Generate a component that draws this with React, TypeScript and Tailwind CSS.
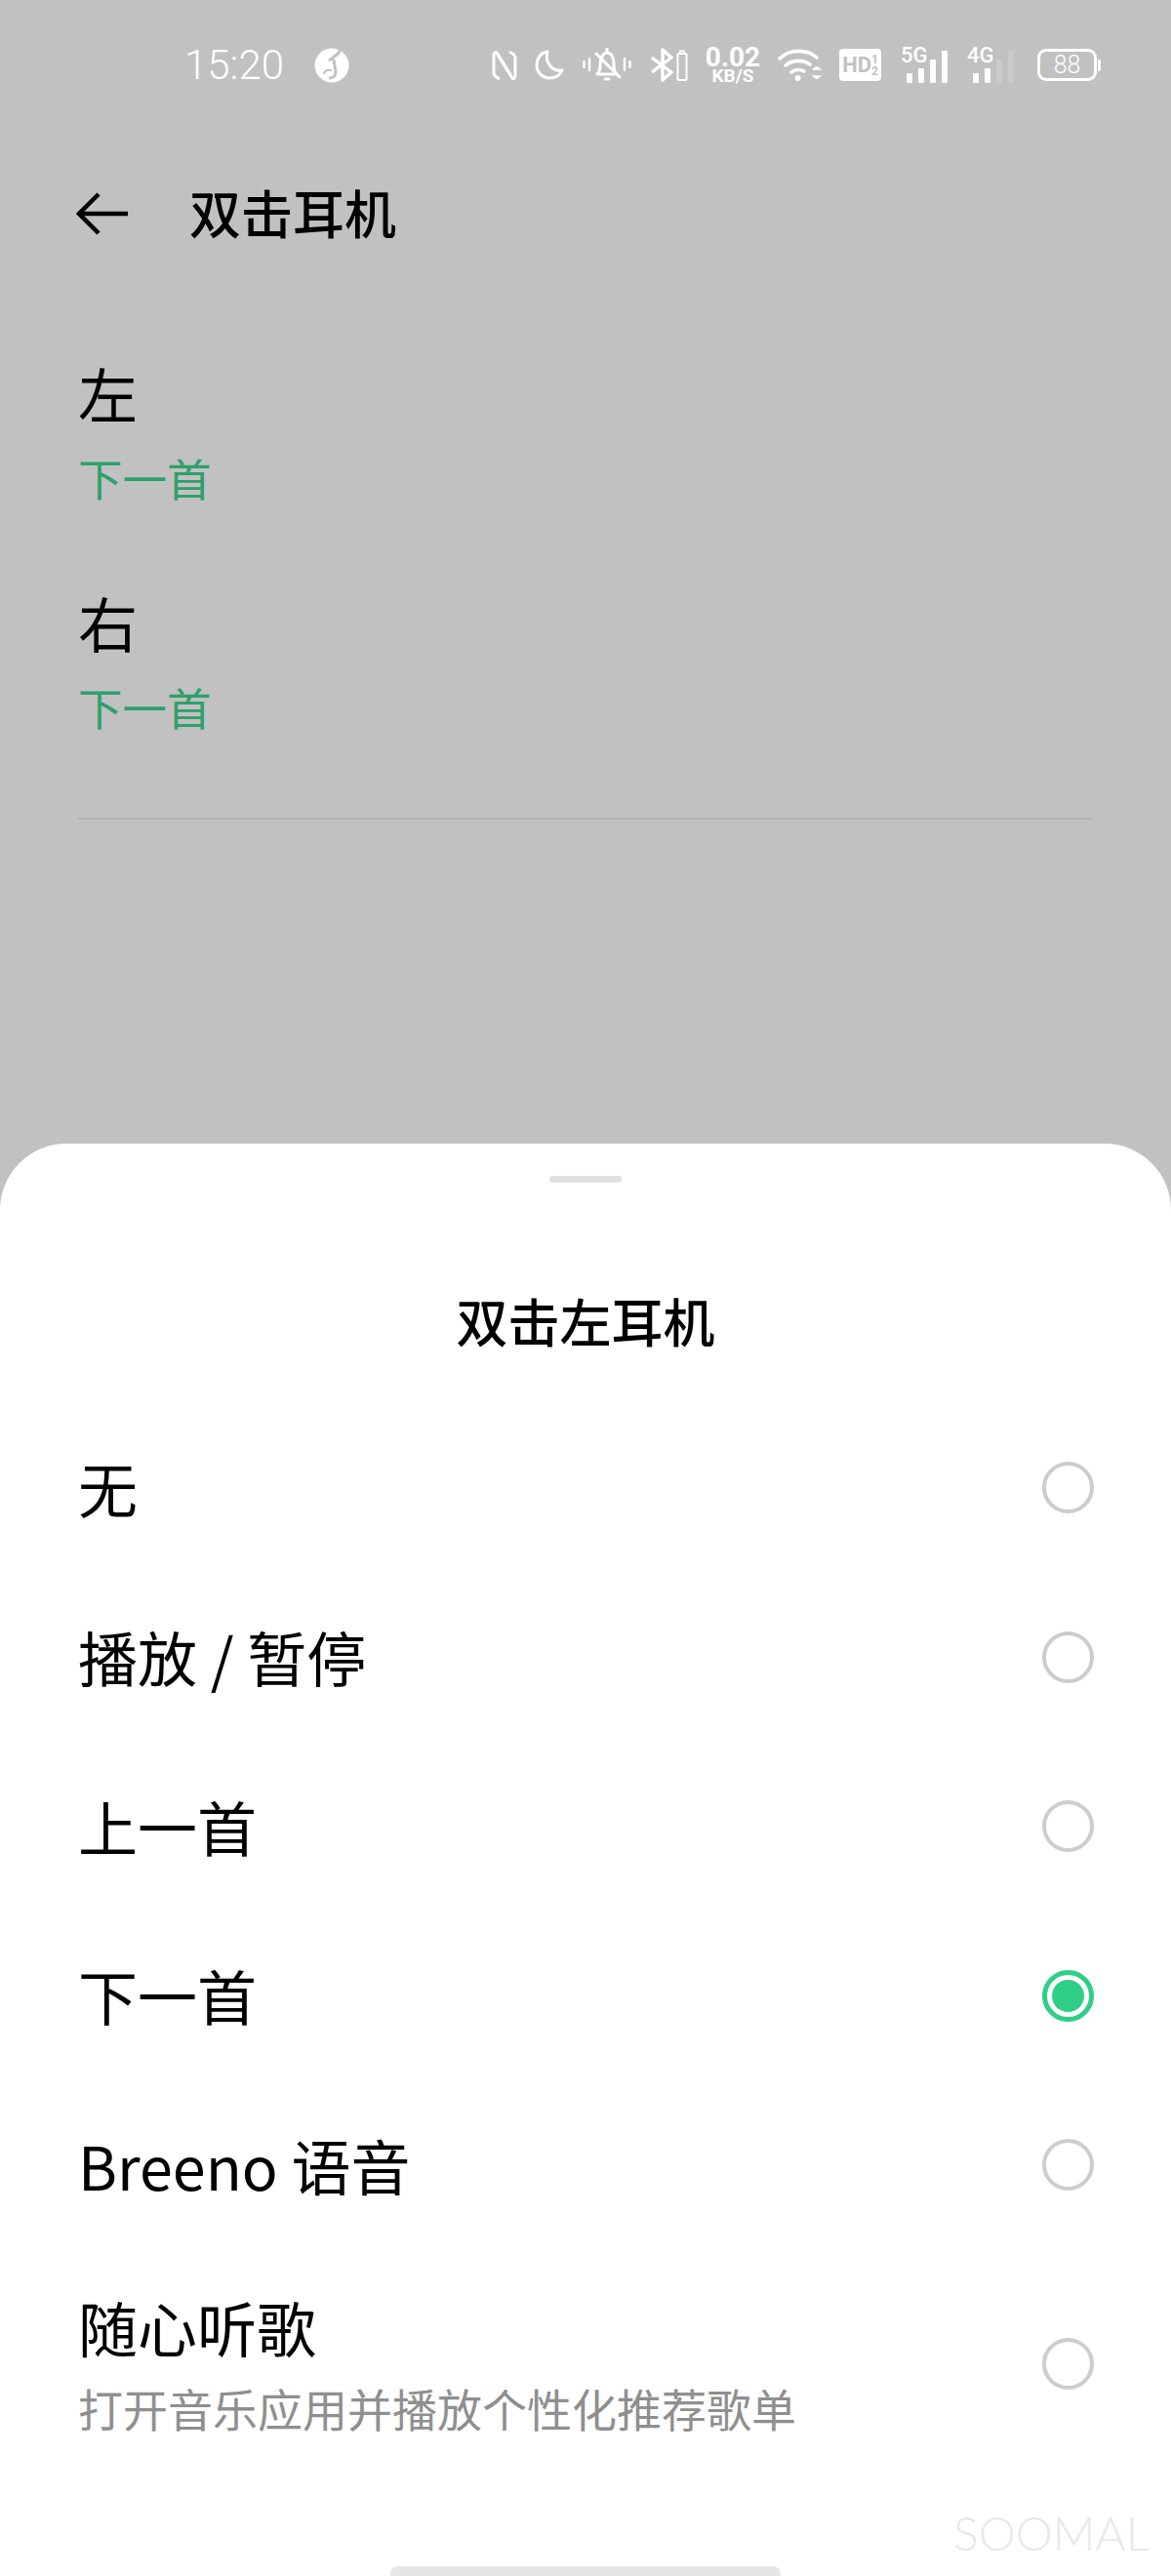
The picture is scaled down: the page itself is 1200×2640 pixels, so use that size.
const cjk = 'font-["Noto_Sans_CJK_SC",sans-serif]';

function Radio({ on }: { on?: boolean }) {
  if (on) {
    return (
      <div className="flex h-[53px] w-[53px] shrink-0 items-center justify-center rounded-full border-[5px] border-[#2fce87]">
        <div className="h-[33px] w-[33px] rounded-full bg-[#2fce87]" />
      </div>
    );
  }
  return <div className="h-[53px] w-[53px] shrink-0 rounded-full border-[4px] border-[#cdcdcd]" />;
}

function Row({ label, hint, on, tall }: { label: string; hint?: string; on?: boolean; tall?: boolean }) {
  return (
    <div className={`flex items-center justify-between pl-[80px] pr-[79px] ${tall ? 'h-[233px]' : 'h-[173.5px]'}`}>
      <div className="flex flex-col">
        <span className="text-[61px] leading-[70px] text-black">{label}</span>
        {hint && <span className="mt-[19px] text-[46px] leading-[56px] text-[#8f8f8f]">{hint}</span>}
      </div>
      <Radio on={on} />
    </div>
  );
}

function MusicIcon() {
  return (
    <svg width="36" height="36" viewBox="0 0 36 36">
      <circle cx="18" cy="18" r="17.5" fill="#fff" />
      <path d="M27 1c-1 5-6 8-12 12" fill="none" stroke="#c1c1c1" strokeWidth="3" />
      <path d="M20 12l2 13c0 4-3 6-7 6" fill="none" stroke="#c1c1c1" strokeWidth="3" />
      <path d="M10 27c0-3 3-5 8-4" fill="none" stroke="#c1c1c1" strokeWidth="2" />
    </svg>
  );
}

function NfcIcon() {
  return (
    <svg width="26" height="32" viewBox="0 0 26 32" fill="none" stroke="#fff" strokeWidth="3" strokeLinejoin="round">
      <path d="M8 30C4 28 2 26 2 24V5c0-2 2-3 3-2l15 24" />
      <path d="M18 2c4 2 6 4 6 6v19c0 2-2 3-3 2L6 5" />
    </svg>
  );
}

function MoonIcon() {
  return (
    <svg width="30" height="31" viewBox="0 0 30 31" fill="none" stroke="#fff" strokeWidth="3" strokeLinejoin="round">
      <path d="M13 2C6 3 2 9 2 16c0 7 6 13 13 13 6 0 11-3 13-8-9 2-18-7-15-19z" />
    </svg>
  );
}

function BellIcon() {
  return (
    <svg width="50" height="35" viewBox="0 0 50 35" fill="none" stroke="#fff" strokeWidth="3" strokeLinecap="round" strokeLinejoin="round">
      <path d="M1.500 14v6M7 11v12M43 11v12M48.500 14v6" strokeWidth="2.400" />
      <path d="M25 1v3M15 27h20M15 27c2-2 3-5 3-9 0-7 3-13 7-13s7 4 7 12c0 5 1 8 3 10" />
      <path d="M14 6l24 24" />
      <path d="M23 32h4" strokeWidth="3" />
    </svg>
  );
}

function BtIcon() {
  return (
    <svg width="40" height="35" viewBox="0 0 40 35" fill="none" stroke="#fff" strokeWidth="3.400">
      <path d="M2 10l20 15-9 8V2l9 8L2 25" strokeLinejoin="round" />
      <rect x="28.500" y="6" width="9" height="27" rx="1" strokeWidth="2" />
      <path d="M30 3.500h6" strokeWidth="2" />
    </svg>
  );
}

function WifiIcon() {
  return (
    <svg width="46" height="35" viewBox="0 0 46 35" fill="none" stroke="#fff" strokeWidth="3.600" strokeLinecap="round">
      <path d="M2 11C12 1 30 1 40 10" />
      <path d="M8 18c7-6 18-6 25-1" />
      <path d="M14 25c4-3 9-3 13-1" />
      <circle cx="20.500" cy="31" r="3" fill="#fff" stroke="none" />
      <path d="M36 22l4-3 4 3z" fill="#fff" strokeWidth="1" strokeLinejoin="round" />
      <path d="M36 29l4 3 4-3z" fill="#fff" strokeWidth="1" strokeLinejoin="round" />
    </svg>
  );
}

function Signal({ tag, dim }: { tag: string; dim?: boolean }) {
  return (
    <div className="relative h-[36px] w-[50px] shrink-0">
      <span className="absolute left-0 top-[-3px] font-['Roboto',sans-serif] text-[22px] font-medium leading-[22px] text-white">{tag}</span>
      <div className="absolute bottom-0 left-[6px] flex items-end gap-[6px]">
        <div className="h-[10px] w-[6px] rounded-[1px] bg-white" />
        <div className="h-[15px] w-[6px] rounded-[1px] bg-white" />
        <div className={`h-[24px] w-[6px] rounded-[1px] ${dim ? 'bg-white/15' : 'bg-white'}`} />
        <div className={`h-[33px] w-[6px] rounded-[1px] ${dim ? 'bg-white/15' : 'bg-white'}`} />
      </div>
    </div>
  );
}

function StatusBar() {
  return (
    <div className="flex h-[132px] items-center pl-[189px] pt-[1px]">
      <span className="w-[133px] font-['Roboto',sans-serif] text-[42px] font-light leading-none text-white">15:20</span>
      <MusicIcon />
      <div className="ml-[146px] flex items-center">
        <NfcIcon />
        <div className="ml-[18px]"><MoonIcon /></div>
        <div className="ml-[19px]"><BellIcon /></div>
        <div className="ml-[19px]"><BtIcon /></div>
        <div className="ml-[16px] flex w-[58px] flex-col items-center font-['Roboto',sans-serif] font-bold text-white">
          <span className="text-[28px] leading-[23px]">0.02</span>
          <span className="text-[19px] leading-[16px]">KB/S</span>
        </div>
        <div className="ml-[17px]"><WifiIcon /></div>
        <div className="ml-[17px] flex h-[33px] w-[43px] items-center justify-center rounded-[4px] bg-white font-['Roboto',sans-serif] font-bold text-[#c1c1c1]">
          <span className="text-[22px] leading-none">HD</span>
          <span className="flex flex-col text-[12px] leading-[12px]">
            <span>1</span>
            <span>2</span>
          </span>
        </div>
        <div className="ml-[20px]"><Signal tag="5G" /></div>
        <div className="ml-[18px]"><Signal tag="4G" dim /></div>
        <div className="ml-[22px] flex items-center">
          <div className="flex h-[33px] w-[61px] items-center justify-center rounded-[9px] border-[3px] border-white font-['Roboto',sans-serif] text-[25px] font-light leading-none text-white">88</div>
          <div className="ml-[1px] h-[12px] w-[3px] rounded-r-[2px] bg-white" />
        </div>
      </div>
    </div>
  );
}

function Setting({ side }: { side: string }) {
  return (
    <div className="flex flex-col pl-[80px]">
      <span className="text-[61px] leading-[70px] text-black">{side}</span>
      <span className="mt-[21px] text-[45.5px] leading-[60px] text-[#2ea06a]">下一首</span>
    </div>
  );
}

export default function App() {
  return (
    <div className={`relative flex h-[2640px] w-[1200px] flex-col overflow-hidden bg-[#c1c1c1] ${cjk}`}>
      <StatusBar />
      <div className="mt-[41px] flex h-[88px] items-center pl-[78px]">
        <svg width="54" height="44" viewBox="0 0 54 44" fill="none" stroke="#000" strokeWidth="4.500" className="mt-[3px] shrink-0">
          <path d="M53 22H3M23 2L3 22l20 20" />
        </svg>
        <h1 className="ml-[62px] text-[53px] font-medium leading-none text-black">双击耳机</h1>
      </div>
      <div className="mt-[107px] flex flex-col gap-[84px]">
        <Setting side="左" />
        <Setting side="右" />
      </div>
      <div className="mx-[80px] mt-[84px] h-[2px] bg-[#b3b3b3]" />

      <div className="mt-auto flex h-[1468px] flex-col rounded-t-[68px] bg-white">
        <div className="mx-auto mt-[33px] h-[7px] w-[74px] rounded-full bg-[#e0e0e0]" />
        <h2 className="mt-[106px] text-center text-[53px] font-medium leading-[70px] text-black">双击左耳机</h2>
        <div className="mt-[50px] flex flex-col">
          <Row label="无" />
          <Row label="播放 / 暂停" />
          <Row label="上一首" />
          <Row label="下一首" on />
          <Row label="Breeno 语音" />
          <Row label="随心听歌" hint="打开音乐应用并播放个性化推荐歌单" tall />
        </div>
        <div className="mx-auto mt-auto h-[10px] w-[400px] rounded-t-[8px] bg-[#e6e6e6]" />
      </div>

      <span className="absolute left-[977px] top-[2566px] font-['Lato',sans-serif] text-[48px] font-light leading-[60px] text-[#e8e8e8]">SOOMAL</span>
    </div>
  );
}
